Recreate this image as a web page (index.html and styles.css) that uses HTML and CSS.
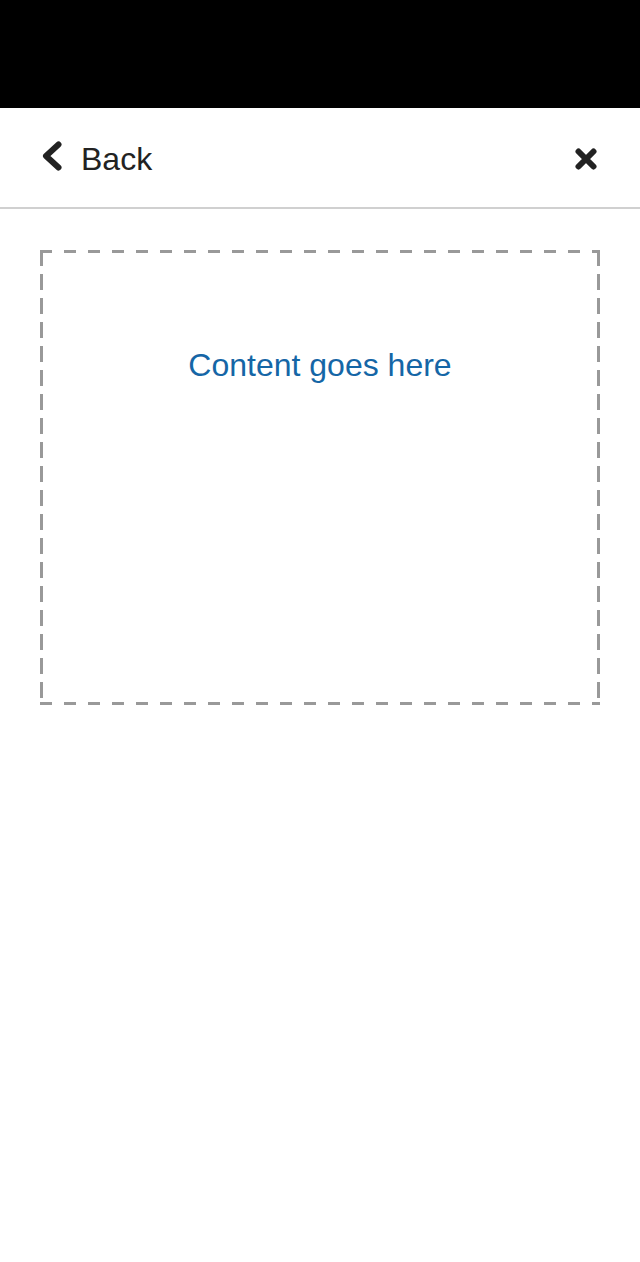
FILE: index.html
```html
<!DOCTYPE html>
<html>
<head>
<meta charset="utf-8">
<link rel="stylesheet" href="styles.css">
</head>
<body>
<div class="statusbar"></div>
<header class="nav">
  <a class="back">
    <svg class="chev" width="20" height="30" viewBox="0 0 20 30"><path d="M16.5 3.5 L4 15 L16.5 26.5" fill="none" stroke="#222" stroke-width="6" stroke-linecap="round" stroke-linejoin="round"/></svg>
    <span>Back</span>
  </a>
  <svg class="close" width="22" height="22" viewBox="0 0 22 22"><path d="M3.5 3.5 L18.5 18.5 M18.5 3.5 L3.5 18.5" stroke="#222" stroke-width="6" stroke-linecap="round"/></svg>
</header>
<main class="main">
  <div class="box">
    <p class="placeholder">Content goes here</p>
  </div>
</main>
</body>
</html>
```
FILE: styles.css
```css
html, body { margin: 0; padding: 0; background: #fff; }
body { font-family: "Liberation Sans", Arial, sans-serif; width: 640px; height: 1262px; }
.statusbar { height: 108px; background: #000; }
.nav {
  box-sizing: border-box;
  height: 101px;
  padding: 3px 43px 0 42px;
  border-bottom: 2px solid #d0d0d0;
  display: flex;
  align-items: center;
  justify-content: space-between;
}
.back { display: flex; align-items: center; gap: 19px; color: #222; font-size: 32px; }
.chev { display: block; margin-bottom: 6px; }
.close { display: block; }
.main { padding: 41px 40px; }
.box {
  height: 455px;
  display: flow-root;
  background-image:
    linear-gradient(to right, #999 12px, transparent 12px),
    linear-gradient(to right, #999 12px, transparent 12px),
    linear-gradient(to bottom, #999 16px, transparent 16px),
    linear-gradient(to bottom, #999 16px, transparent 16px);
  background-size: 24px 3px, 24px 3px, 3px 24px, 3px 24px;
  background-repeat: repeat-x, repeat-x, repeat-y, repeat-y;
  background-position: left top, left bottom, left top, right top;
}
.placeholder {
  margin: 97px 0 0;
  text-align: center;
  color: #1566a6;
  font-size: 32px;
}
```
